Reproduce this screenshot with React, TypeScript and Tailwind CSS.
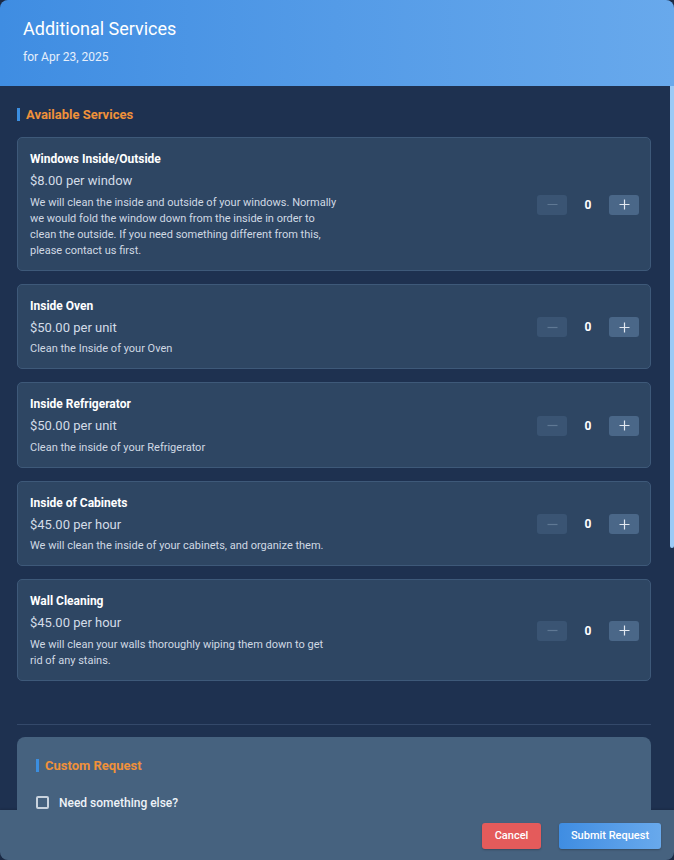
import { useState } from 'react';

type Service = {
  id: string;
  name: string;
  price: string;
  description: string;
};

const services: Service[] = [
  {
    id: 'windows',
    name: 'Windows Inside/Outside',
    price: '$8.00 per window',
    description:
      'We will clean the inside and outside of your windows. Normally we would fold the window down from the inside in order to clean the outside. If you need something different from this, please contact us first.',
  },
  {
    id: 'oven',
    name: 'Inside Oven',
    price: '$50.00 per unit',
    description: 'Clean the Inside of your Oven',
  },
  {
    id: 'fridge',
    name: 'Inside Refrigerator',
    price: '$50.00 per unit',
    description: 'Clean the inside of your Refrigerator',
  },
  {
    id: 'cabinets',
    name: 'Inside of Cabinets',
    price: '$45.00 per hour',
    description: 'We will clean the inside of your cabinets, and organize them.',
  },
  {
    id: 'walls',
    name: 'Wall Cleaning',
    price: '$45.00 per hour',
    description: 'We will clean your walls thoroughly wiping them down to get rid of any stains.',
  },
];

function SectionTitle({ children }: { children: string }) {
  return (
    <h3 className="border-l-[3px] border-[#3b8ee0] pl-[6px] text-[13px] font-bold leading-[13px] text-[#f0913a]">
      {children}
    </h3>
  );
}

function Stepper({ value, onChange }: { value: number; onChange: (v: number) => void }) {
  const canDecrease = value > 0;
  return (
    <div className="flex items-center">
      <button
        type="button"
        disabled={!canDecrease}
        onClick={() => onChange(value - 1)}
        className={
          canDecrease
            ? 'flex h-5 w-[30px] items-center justify-center rounded-[3px] bg-[#4a6788] text-[#e2e8f0]'
            : 'flex h-5 w-[30px] items-center justify-center rounded-[3px] bg-[#3a5473] text-[#5f7894]'
        }
      >
        <svg width="11" height="11" viewBox="0 0 11 11" fill="none" stroke="currentColor" strokeWidth="1.2">
          <path d="M0.5 5.5h10" />
        </svg>
      </button>
      <span className="w-[42px] text-center text-[12px] font-bold text-white">{value}</span>
      <button
        type="button"
        onClick={() => onChange(value + 1)}
        className="flex h-5 w-[30px] items-center justify-center rounded-[3px] bg-[#4a6788] text-[#e2e8f0]"
      >
        <svg width="11" height="11" viewBox="0 0 11 11" fill="none" stroke="currentColor" strokeWidth="1.2">
          <path d="M0.5 5.5h10M5.5 0.5v10" />
        </svg>
      </button>
    </div>
  );
}

function ServiceCard({
  service,
  qty,
  onChange,
}: {
  service: Service;
  qty: number;
  onChange: (v: number) => void;
}) {
  return (
    <div className="flex items-center justify-between rounded-[5px] border border-[#3e5979] bg-[#2e4663] pt-[13px] pr-[11px] pb-[11px] pl-3">
      <div className="max-w-[308px]">
        <div className="text-[12px] font-bold leading-4 text-white">{service.name}</div>
        <div className="mt-[5px] text-[13px] leading-[18px] text-[#d3dce7]">{service.price}</div>
        <p className="mt-[4.5px] text-[11px] leading-4 text-[#d0d9e4]">{service.description}</p>
      </div>
      <Stepper value={qty} onChange={onChange} />
    </div>
  );
}

export default function App() {
  const [quantities, setQuantities] = useState<Record<string, number>>({});
  const [needMore, setNeedMore] = useState(false);

  return (
    <div
      className="h-[860px] w-[674px] bg-[#1b2a44]"
      style={{ fontFamily: 'Roboto, "Liberation Sans", sans-serif' }}
    >
      <div className="flex h-full flex-col overflow-hidden rounded-lg bg-[#1e3150]">
        {/* header */}
        <div className="h-[86px] shrink-0 bg-linear-to-r from-[#3f8de2] to-[#68a9ec] px-[23px] pt-[18px]">
          <h2 className="text-[18px] leading-[22px] text-white">Additional Services</h2>
          <p className="mt-[9px] text-[12px] leading-4 text-[#e6effb]">for Apr 23, 2025</p>
        </div>

        <div className="relative min-h-0 flex-1">
          <div className="h-full overflow-y-auto pt-[22px] pr-[23px] pb-[390px] pl-[17px] [scrollbar-width:none]">
            <SectionTitle>Available Services</SectionTitle>

            <div className="mt-4 flex flex-col gap-[13px]">
              {services.map((s) => (
                <ServiceCard
                  key={s.id}
                  service={s}
                  qty={quantities[s.id] ?? 0}
                  onChange={(v) => setQuantities((q) => ({ ...q, [s.id]: v }))}
                />
              ))}
            </div>

            <div className="mt-[43px] h-px bg-[#34496a]" />

            <div className="mt-3 rounded-lg bg-[#46627f] px-[19px] pt-[22px] pb-5">
              <SectionTitle>Custom Request</SectionTitle>
              <label className="mt-[23px] flex items-center gap-[10px] text-[12px] font-medium leading-4 text-[#eef3f8]">
                <input
                  type="checkbox"
                  checked={needMore}
                  onChange={(e) => setNeedMore(e.target.checked)}
                  className="h-[13px] w-[13px] appearance-none rounded-[2px] border-2 border-[#c9d3de] bg-transparent checked:bg-[#3b8ee0]"
                />
                Need something else?
              </label>
            </div>
          </div>
          <div className="pointer-events-none absolute top-0 right-0 h-[462px] w-[4px] rounded-b-[2px] bg-[#9bcaf6]" />
        </div>

        {/* footer */}
        <div className="flex h-[50px] shrink-0 items-center justify-end gap-[18px] bg-[#46627f] pt-[2px] pr-[13px] shadow-[0_-1px_2px_rgba(0,0,0,0.15)]">
          <button
            type="button"
            className="h-[26px] w-[59px] rounded-[3px] bg-[#e45b5b] text-[11px] font-medium text-white shadow-[0_1px_2px_rgba(0,0,0,0.25)]"
          >
            Cancel
          </button>
          <button
            type="button"
            className="h-[26px] w-[102px] rounded-[3px] bg-linear-to-r from-[#3f8de2] to-[#68a9ec] text-[11px] font-medium text-white shadow-[0_1px_2px_rgba(0,0,0,0.25)]"
          >
            Submit Request
          </button>
        </div>
      </div>
    </div>
  );
}
